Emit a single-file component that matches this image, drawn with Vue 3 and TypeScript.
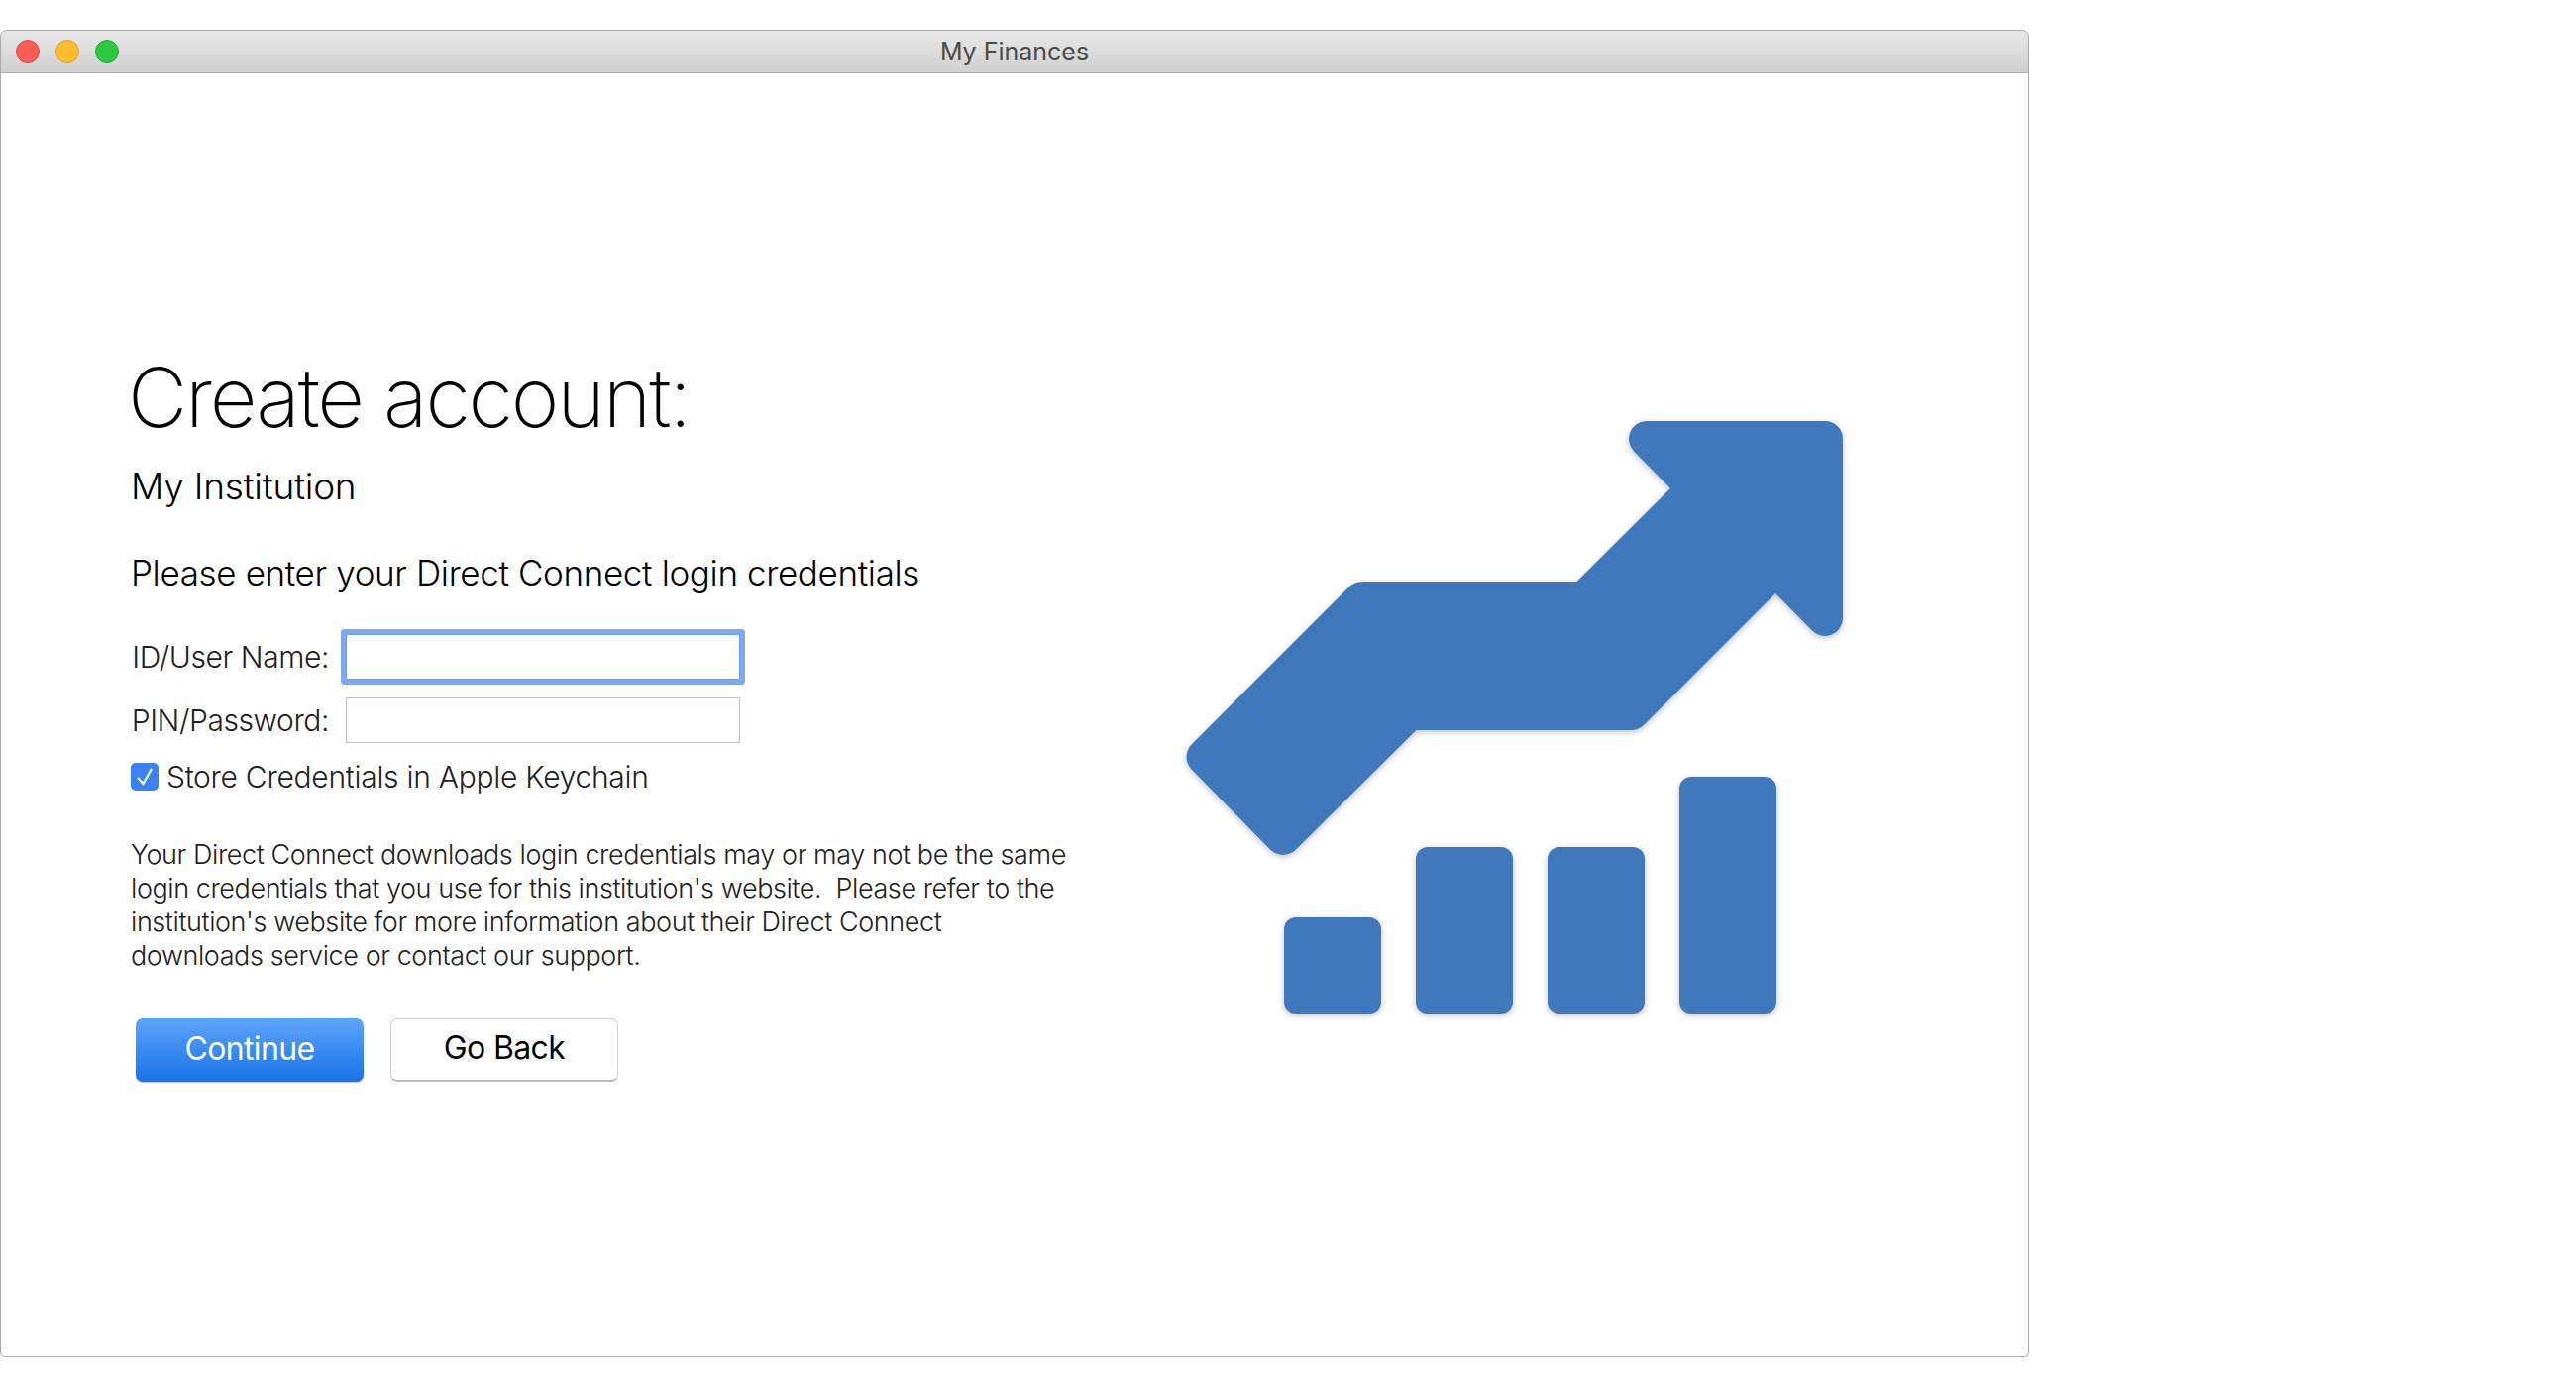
<script setup lang="ts">
import { ref } from 'vue'

const userName = ref('')
const password = ref('')
const storeCredentials = ref(true)

const bars = [
  { x: 1296, y: 926, h: 97 },
  { x: 1429, y: 855, h: 168 },
  { x: 1562, y: 855, h: 168 },
  { x: 1695, y: 784, h: 239 }
]
</script>

<template>
  <div class="window">
    <header class="titlebar">
      <div class="lights">
        <span class="light red"></span>
        <span class="light yellow"></span>
        <span class="light green"></span>
      </div>
      <span class="window-title">My Finances</span>
    </header>

    <main class="content">
      <section class="form-column">
        <h1>Create account:</h1>
        <h2>My Institution</h2>
        <p class="prompt">Please enter your Direct Connect login credentials</p>

        <div class="fields">
          <label for="userName">ID/User Name:</label>
          <input id="userName" v-model="userName" class="focused" type="text" />
          <label for="password">PIN/Password:</label>
          <input id="password" v-model="password" type="password" />
        </div>

        <label class="keychain">
          <input v-model="storeCredentials" type="checkbox" />
          <span class="box">
            <svg viewBox="0 0 28 28" width="28" height="28">
              <path d="M7 15 L12.5 21 L21 6" fill="none" stroke="#fff" stroke-width="2.2" />
            </svg>
          </span>
          Store Credentials in Apple Keychain
        </label>

        <p class="note">
          Your Direct Connect downloads login credentials may or may not be the same<br />
          login credentials that you use for this institution's website.&nbsp; Please refer to the<br />
          institution's website for more information about their Direct Connect<br />
          downloads service or contact our support.
        </p>

        <div class="actions">
          <button type="button" class="primary">Continue</button>
          <button type="button" class="secondary">Go Back</button>
        </div>
      </section>

      <svg class="graphic" viewBox="1190 415 680 620" width="680" height="620">
        <path
          d="M1662 425 H1842 A18 18 0 0 1 1860 443 V624 A18 18 0 0 1 1829.3 636.7 L1792 599 L1660 731 Q1654 737 1646 737 H1429.4 L1307.7 857.7 A18 18 0 0 1 1282.3 857.7 L1202.8 776.7 A18 18 0 0 1 1202.8 751.3 L1360 594 Q1366 587 1376 587 H1591.5 L1686 493 L1649.3 455.7 A18 18 0 0 1 1662 425 Z"
        />
        <rect v-for="bar in bars" :key="bar.x" :x="bar.x" :y="bar.y" width="98" :height="bar.h" rx="12" />
      </svg>
    </main>
  </div>
</template>

<style scoped>
.window {
  box-sizing: border-box;
  width: 2048px;
  height: 1340px;
  margin-top: 30px;
  border: 1px solid #aaa;
  border-top-color: #a8a8a8;
  border-radius: 7px 7px 5px 5px;
  display: flex;
  flex-direction: column;
  overflow: hidden;
  background: #fff;
  font-family: Inter, "Liberation Sans", sans-serif;
  color: #000;
}

.titlebar {
  position: relative;
  flex: none;
  height: 42px;
  display: flex;
  align-items: center;
  justify-content: center;
  background: linear-gradient(#e7e7e7, #d0d0d0);
  border-bottom: 1px solid #b0b0b0;
}

.lights {
  position: absolute;
  left: 15px;
  top: 9px;
  display: flex;
  gap: 16px;
}

.light {
  box-sizing: border-box;
  width: 24px;
  height: 24px;
  border-radius: 50%;
  border: 1px solid;
}

.red {
  background: #fc5c57;
  border-color: #e2463f;
}

.yellow {
  background: #fdbc2e;
  border-color: #e1a325;
}

.green {
  background: #29c940;
  border-color: #1dad2b;
}

.window-title {
  font-size: 25px;
  color: #4a4a4a;
}

.content {
  flex: 1;
  display: flex;
  align-items: flex-start;
}

.form-column {
  flex: none;
  box-sizing: border-box;
  width: 1189px;
  padding: 277px 0 0 131px;
}

h1 {
  margin: 0 0 0 -3px;
  font-size: 83px;
  line-height: 100px;
  font-weight: 200;
  letter-spacing: -2.2px;
}

h2 {
  margin: 17px 0 0;
  font-size: 37px;
  line-height: 46px;
  font-weight: 300;
  letter-spacing: -0.25px;
}

.prompt {
  margin: 41px 0 0;
  font-size: 35px;
  line-height: 46px;
  font-weight: 300;
  letter-spacing: -0.36px;
}

.fields {
  margin-top: 39px;
  display: grid;
  grid-template-columns: 200px 398px;
  column-gap: 17px;
  row-gap: 18px;
  align-items: center;
}

.fields label {
  font-size: 30px;
  font-weight: 350;
  letter-spacing: -0.42px;
  color: #222;
  text-align: right;
  white-space: nowrap;
}

.fields input {
  box-sizing: border-box;
  height: 46px;
  border: 1px solid #c4c4c4;
  outline: none;
  background: #fff;
}

.fields input.focused {
  border-color: #6c9fe6;
  box-shadow: 0 0 0 5px #7ba9f5;
  border-radius: 1px;
}

.keychain {
  margin-top: 15px;
  display: flex;
  align-items: center;
  gap: 8px;
  font-size: 30px;
  line-height: 38px;
  font-weight: 350;
  letter-spacing: -0.28px;
  color: #222;
}

.keychain input {
  display: none;
}

.box {
  flex: none;
  width: 28px;
  height: 28px;
  border-radius: 5px;
  background: #3b82f6;
  display: flex;
}

.note {
  margin: 43px 0 0;
  font-size: 27px;
  line-height: 34px;
  font-weight: 350;
  letter-spacing: -0.42px;
  color: #222;
  white-space: nowrap;
}

.actions {
  margin-top: 46px;
  margin-left: 5px;
  display: flex;
  gap: 27px;
}

.actions button {
  box-sizing: border-box;
  width: 230px;
  height: 64px;
  border-radius: 7px;
  font-family: inherit;
  font-size: 32px;
  font-weight: 400;
  letter-spacing: -0.65px;
  padding: 0 0 4px;
}

.primary {
  border: none;
  color: #fff;
  background: linear-gradient(#5ea4fb, #1873e8);
  box-shadow: 0 1px 1px rgba(0, 0, 0, 0.25);
}

.secondary {
  border: 1px solid #d0d0d0;
  border-bottom: 2px solid #bdbdbd;
  color: #000;
  background: #fff;
}

.graphic {
  flex: none;
  margin-top: 341px;
  fill: #3f79bc;
  filter: drop-shadow(0 2px 3px rgba(0, 0, 0, 0.25));
}
</style>
